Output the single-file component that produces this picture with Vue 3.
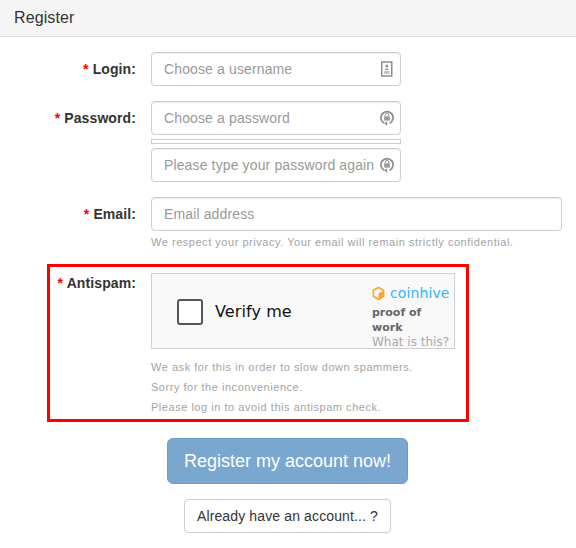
<template>
  <div class="panel">
    <div class="panel-heading">Register</div>

    <form class="form" @submit.prevent>
      <div class="form-group">
        <label class="label"><span class="req">*</span> Login:</label>
        <div class="field">
          <div class="input-wrap">
            <input class="input" type="text" placeholder="Choose a username" />
            <svg class="icon" viewBox="0 0 12 16" width="12" height="16">
              <rect x="0.75" y="1" width="10" height="14" fill="none" stroke="#8f8f8f" stroke-width="1.5" />
              <circle cx="5.75" cy="5" r="1.5" fill="#8f8f8f" />
              <path d="M3.5 9 Q5.75 5.8 8 9 Z" fill="#8f8f8f" />
              <rect x="3" y="10" width="5.5" height="3" fill="#c4c4c4" />
            </svg>
          </div>
        </div>
      </div>

      <div class="form-group">
        <label class="label"><span class="req">*</span> Password:</label>
        <div class="field">
          <div class="input-wrap">
            <input class="input" type="password" placeholder="Choose a password" />
            <svg class="icon icon-lock" viewBox="0 0 14 16" width="14" height="16">
              <path d="M4.4 13.2 A6.1 6.1 0 1 1 9.6 13.2" fill="none" stroke="#8a8a8a" stroke-width="1.7" />
              <path d="M5.2 6.8 V5.2 A1.8 1.8 0 0 1 8.8 5.2 V6.8" fill="none" stroke="#999" stroke-width="1" />
              <rect x="4.2" y="6.4" width="5.6" height="4.2" fill="#999" />
              <path d="M4.4 13.4 L7.2 11.2 V15.8 Z" fill="#8a8a8a" />
            </svg>
          </div>
          <div class="strength"></div>
          <div class="input-wrap">
            <input class="input" type="password" placeholder="Please type your password again" />
            <svg class="icon icon-lock" viewBox="0 0 14 16" width="14" height="16">
              <path d="M4.4 13.2 A6.1 6.1 0 1 1 9.6 13.2" fill="none" stroke="#8a8a8a" stroke-width="1.7" />
              <path d="M5.2 6.8 V5.2 A1.8 1.8 0 0 1 8.8 5.2 V6.8" fill="none" stroke="#999" stroke-width="1" />
              <rect x="4.2" y="6.4" width="5.6" height="4.2" fill="#999" />
              <path d="M4.4 13.4 L7.2 11.2 V15.8 Z" fill="#8a8a8a" />
            </svg>
          </div>
        </div>
      </div>

      <div class="form-group email-group">
        <label class="label"><span class="req">*</span> Email:</label>
        <div class="field">
          <input class="input input-wide" type="email" placeholder="Email address" />
          <p class="hint">We respect your privacy. Your email will remain strictly confidential.</p>
        </div>
      </div>

      <div class="form-group antispam">
        <label class="label"><span class="req">*</span> Antispam:</label>
        <div class="field">
          <div class="captcha">
            <div class="verify">
              <span class="checkbox"></span>
              <span class="verify-text">Verify me</span>
            </div>
            <div class="brand">
              <div class="brand-name">
                <svg viewBox="0 0 14 16" width="13" height="15">
                  <path d="M7 1.5 L12.5 4.6 V11 L7 14.5 L1.5 11 V4.6 Z" fill="none" stroke="#ffa62b" stroke-width="1.8" stroke-linejoin="round" />
                  <path d="M7 8 L12.5 4.6 V11 L7 14.5 Z" fill="#ffa62b" />
                </svg>
                <span>coinhive</span>
              </div>
              <div class="proof">proof of work</div>
              <div class="what">What is this?</div>
            </div>
          </div>
          <p class="hint hint-line">We ask for this in order to slow down spammers.</p>
          <p class="hint hint-line">Sorry for the inconvenience.</p>
          <p class="hint hint-line">Please log in to avoid this antispam check.</p>
        </div>
      </div>

      <div class="actions">
        <button class="btn-primary" type="submit">Register my account now!</button>
        <button class="btn-default" type="button">Already have an account... ?</button>
      </div>
    </form>
  </div>
</template>

<script setup>
</script>

<style>
html, body {
  margin: 0;
  background: #fff;
}
</style>

<style scoped>
.panel {
  width: 576px;
  height: 548px;
  overflow: hidden;
  box-sizing: border-box;
  font-family: "Liberation Sans", Arial, sans-serif;
  font-size: 14px;
  color: #333;
}

.panel-heading {
  height: 36px;
  box-sizing: content-box;
  padding-left: 14px;
  line-height: 35px;
  font-size: 16px;
  letter-spacing: 0.1px;
  background: #f5f5f5;
  border-bottom: 1px solid #ddd;
}

.form {
  display: flex;
  flex-direction: column;
  padding-top: 15px;
}

.form-group {
  display: grid;
  grid-template-columns: 136px 1fr;
  column-gap: 15px;
  margin-bottom: 15px;
  padding-right: 14px;
}

.email-group {
  margin-bottom: 0;
}

.label {
  font-size: 14px;
  font-weight: bold;
  text-align: right;
  padding-top: 9px;
  line-height: 16px;
  letter-spacing: 0.1px;
}

.req {
  color: #f00;
}

.input-wrap {
  position: relative;
  width: 250px;
}

.input {
  display: block;
  width: 100%;
  height: 34px;
  box-sizing: border-box;
  padding: 6px 12px;
  border: 1px solid #ccc;
  border-radius: 4px;
  font-family: inherit;
  font-size: 14px;
  color: #555;
  background: #fff;
  box-shadow: inset 0 1px 1px rgba(0, 0, 0, 0.075);
}

.input::placeholder {
  color: #999;
  opacity: 1;
  letter-spacing: 0.13px;
}

.input-wide {
  width: 411px;
}

.icon {
  position: absolute;
  right: 8px;
  top: 9px;
}

.icon-lock {
  right: 7px;
}

.strength {
  width: 248px;
  height: 3px;
  margin: 4px 0;
  border: 1px solid #ccc;
}

.hint {
  margin: 0;
  font-size: 11px;
  color: #a3a3a3;
  padding-top: 4px;
  line-height: 15px;
  letter-spacing: 0.53px;
}

.antispam {
  margin: 14px 0 0 47px;
  width: 422px;
  height: 158px;
  box-sizing: border-box;
  border: 3px solid #f00;
  grid-template-columns: 86px 1fr;
  padding: 6px 0 0;
}

.antispam .label {
  padding-top: 2px;
  margin-top: 0;
}

.captcha {
  width: 304px;
  height: 76px;
  box-sizing: border-box;
  border: 1px solid #d0d0d0;
  background: #f9f9f9;
  display: flex;
  justify-content: space-between;
  font-family: "DejaVu Sans", sans-serif;
}

.verify {
  display: flex;
  align-items: center;
  gap: 12px;
  padding-left: 25px;
  padding-top: 1px;
}

.checkbox {
  width: 22px;
  height: 22px;
  border: 2px solid #555;
  border-radius: 3px;
  background: #fff;
}

.verify-text {
  font-size: 16px;
  color: #111;
  letter-spacing: 0.1px;
}

.brand {
  width: 82px;
  padding-top: 11px;
}

.brand-name {
  display: flex;
  align-items: center;
  gap: 5px;
  color: #33b5ff;
  font-size: 14px;
  line-height: 16px;
  letter-spacing: 0.1px;
}

.proof {
  font-size: 11px;
  font-weight: bold;
  color: #666;
  line-height: 15px;
  margin-top: 4px;
  width: 60px;
}

.what {
  font-size: 12px;
  color: #aaa;
  line-height: 11px;
  margin-top: 2px;
}

.hint-line {
  padding-top: 0;
  line-height: 20px;
}

.captcha + .hint-line {
  margin-top: 8px;
}

.actions {
  display: flex;
  flex-direction: column;
  align-items: center;
  padding: 16px 1px 0 0;
  gap: 15px;
}

.btn-primary {
  width: 241px;
  height: 46px;
  font-family: inherit;
  font-size: 18px;
  color: #fff;
  background: #7aa7d0;
  border: 1px solid #6e9cc6;
  border-radius: 6px;
}

.btn-default {
  width: 207px;
  height: 34px;
  font-family: inherit;
  font-size: 14px;
  letter-spacing: 0.13px;
  color: #333;
  background: #fff;
  border: 1px solid #ccc;
  border-radius: 4px;
}
</style>
